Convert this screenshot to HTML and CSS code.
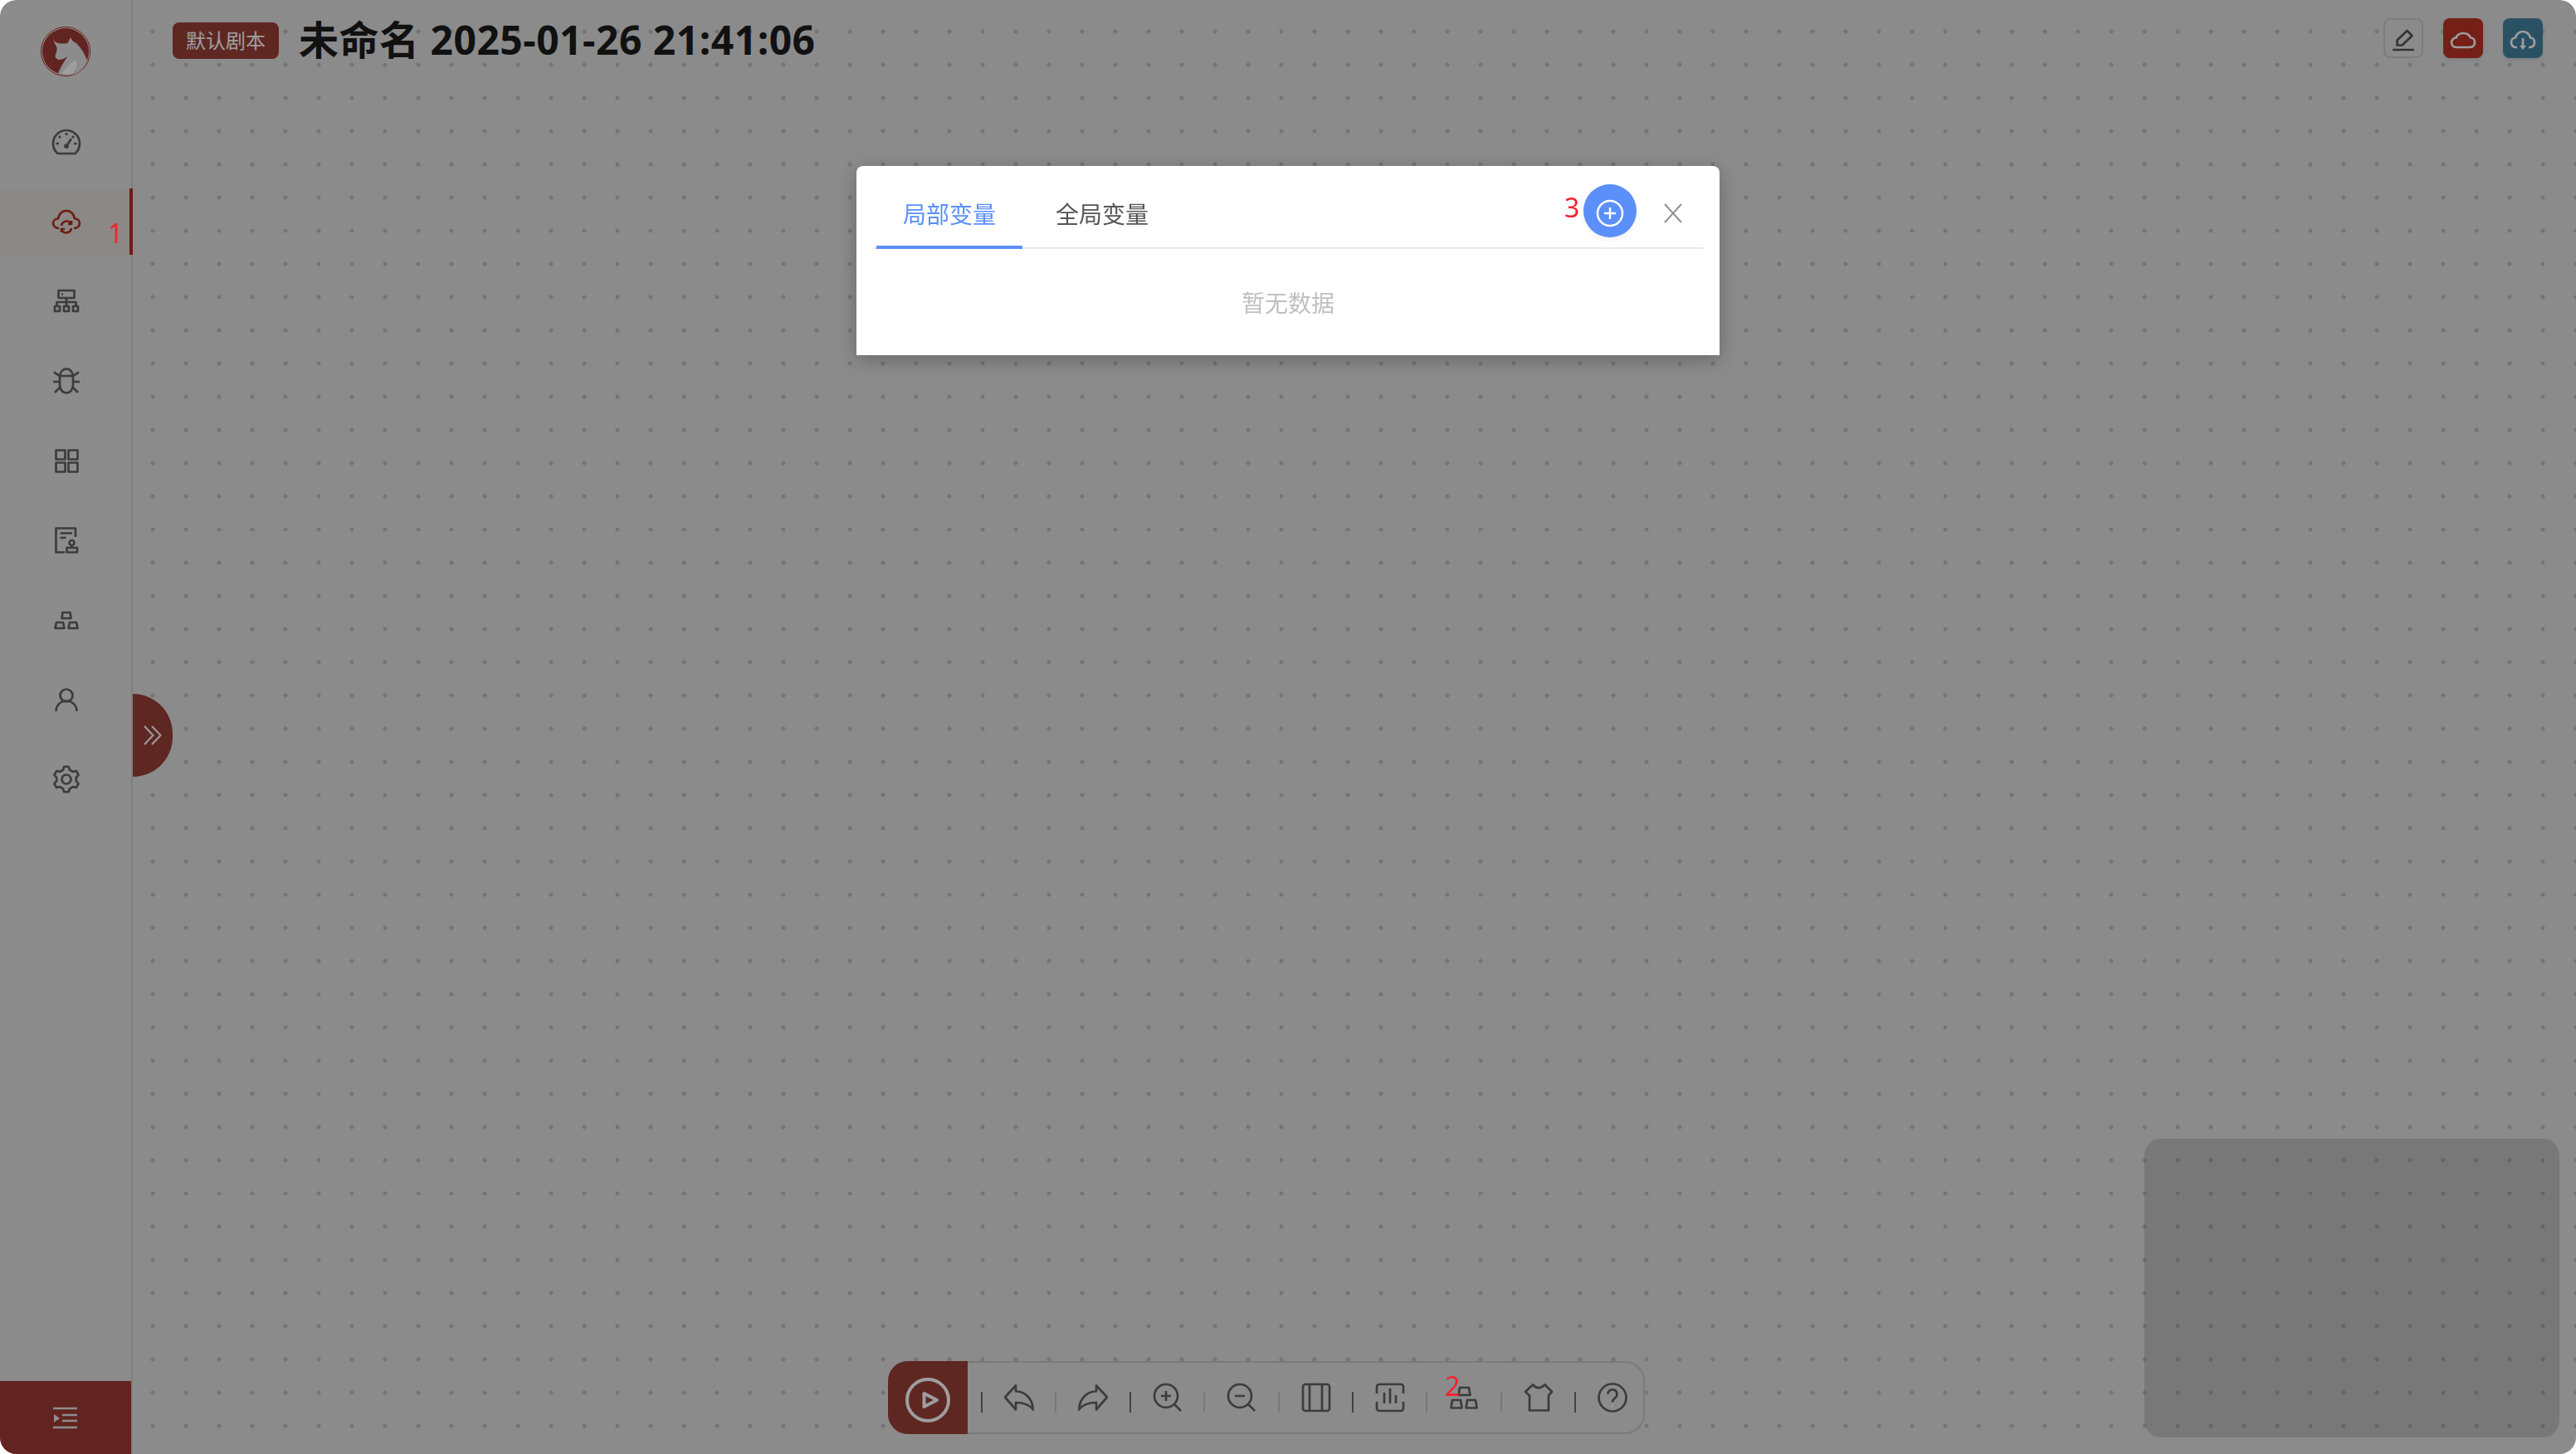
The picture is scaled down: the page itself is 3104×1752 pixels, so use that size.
FILE: index.html
```html
<!DOCTYPE html>
<html>
<head>
    <title>未命名 2025-01-26 21:41:06</title>
    <link rel="stylesheet" href="styles.css">
</head>
<body>
    <div class="app">
        <aside class="sidebar">
            <svg class="logo" viewBox="0 0 60 60">
                <circle cx="30" cy="30" r="29.5" fill="none" stroke="#b52d20" stroke-width="1"/>
                <circle cx="30" cy="30" r="28" fill="#9e3a34"/>
                <path fill="#e2e2e2" d="M14.3 9.7C14.5 14 15.5 16.5 18.5 19 22 21 28 21 32.7 19.7L36 13C37 16.5 39.500 18.500 42.700 19.700 48 25 53 32 56 41 53 49 48 54 42.700 56.500 36 58.500 27 58.500 21 56.300 24.500 48 28.500 41 32.700 36.300 28 39 24.500 40.500 21 39.700 18 38.500 17.300 36.500 17.700 34.700 19.500 30 20 27 19.300 24.700 16.500 20 14.800 15 14.300 9.700Z"/>
                <path fill="#ffffff" d="M25 56.800C30 50 36 44 42 40 45 46 42 53 38 57.500 33 58.300 29 58 25 56.800Z"/>
            </svg>
            <nav class="nav">
                <a class="nav-item">
                    <svg class="ico" viewBox="0 0 40 40"><path d="M9.400 34h21.200A16 16 0 1 0 9.400 34z"/><path d="M20 9v3M11 13l2 2M29 13l-2 2M7.500 22H11M32.500 22H29M20 25l6-9"/><circle cx="20" cy="25" r="1.500"/></svg>
                </a>
                <a class="nav-item active">
                    <svg class="ico" viewBox="0 0 40 40"><path d="M11 28C7 28 4 25.500 4 22 4 19 6.500 16.500 10 16.500 11.500 10.500 15 7 20 7S28.500 10.500 30 16.500C33.500 16.500 36 19 36 22 36 25.500 33 28 29 28"/><path d="M14 25a6.500 6.500 0 0 1 11.500-3M26 28a6.500 6.500 0 0 1-11.500 3M26 19v4h-4M14 33v-4h4"/></svg>
                </a>
                <a class="nav-item">
                    <svg class="ico" viewBox="0 0 40 40"><rect x="10.500" y="7" width="19" height="9"/><path d="M14 11.500h2M20 16v5M8.500 26v-5h23v5M20 21v5"/><rect x="6" y="26" width="6" height="6"/><rect x="17" y="26" width="6" height="6"/><rect x="28" y="26" width="6" height="6"/></svg>
                </a>
                <a class="nav-item">
                    <svg class="ico" viewBox="0 0 40 40"><path d="M12 18C12 10 15 5.500 20 5.500S28 10 28 18V25C28 31 24 34.500 20 34.500S12 31 12 25Z"/><path d="M12 14H28M5 9.500L12 14M35 9.500L28 14M4 21H12M36 21H28M6 34L12 28M34 34L28 28"/></svg>
                </a>
                <a class="nav-item">
                    <svg class="ico" viewBox="0 0 40 40"><rect x="7.500" y="7.500" width="11" height="11"/><rect x="22.500" y="7.500" width="11" height="11"/><rect x="7.500" y="22.500" width="11" height="11"/><rect x="22.500" y="22.500" width="11" height="11"/></svg>
                </a>
                <a class="nav-item">
                    <svg class="ico" viewBox="0 0 40 40"><path d="M18 34.500H7.500V5.500H31V16"/><path d="M12.500 11.500H27M12.500 17H19.500"/><circle cx="26.500" cy="23" r="3"/><path d="M26.500 26V29"/><rect x="20.500" y="29" width="12.500" height="5.500"/></svg>
                </a>
                <a class="nav-item">
                    <svg class="ico" viewBox="0 0 40 40"><path d="M15.500 11h9l1 7H14.500zM8 23h8l1.500 7H6.500zM24 23h8l1.500 7H22.500z"/></svg>
                </a>
                <a class="nav-item">
                    <svg class="ico" viewBox="0 0 40 40"><circle cx="20" cy="15" r="7.500"/><path d="M7.500 34a12.500 12.500 0 0 1 25 0"/></svg>
                </a>
                <a class="nav-item">
                    <svg class="ico" viewBox="0 0 40 40"><polygon points="15.900,8.720 17.310,4.740 22.690,4.740 24.100,8.720 27.720,10.810 31.870,10.040 34.560,14.700 31.820,17.910 31.820,22.090 34.560,25.300 31.870,29.960 27.720,29.190 24.100,31.280 22.690,35.260 17.310,35.260 15.900,31.280 12.280,29.190 8.130,29.960 5.440,25.300 8.180,22.090 8.180,17.910 5.440,14.700 8.130,10.040 12.280,10.810"/><circle cx="20" cy="20" r="5.500"/></svg>
                </a>
            </nav>
            <button class="collapse">
                <svg width="32" height="32" viewBox="0 0 32 32"><path d="M1 4H30M12 12H30M12 19H30M1 27H30" stroke="#e6e6e6" stroke-width="2.500" fill="none"/><path d="M2 11L9 16L2 21Z" fill="#e6e6e6"/></svg>
            </button>
        </aside>

        <main class="canvas">
            <header class="header">
                <div class="title-wrap">
                    <span class="tag">默认剧本</span>
                    <h1 class="title">未命名 2025-01-26 21:41:06</h1>
                </div>
                <div class="actions">
                    <button class="act act-edit">
                        <svg class="ico" viewBox="0 0 48 48"><path d="M11 38H37M16.500 32.500V26.500L28.500 15 34.500 21 22.500 32.500Z"/></svg>
                    </button>
                    <button class="act act-red">
                        <svg class="ico" viewBox="0 0 48 48"><path d="M15.500 35H32C35.500 35 38 32.500 38 29 38 25.500 35.500 23.500 33 23.500 31.500 20 28 18 24 18 20 18 16.500 20.500 15.500 23.500 12 23.500 10 26.500 10 29 10 32.500 12.500 35 15.500 35Z"/></svg>
                    </button>
                    <button class="act act-blue">
                        <svg class="ico" viewBox="0 0 48 48"><path d="M17 35H15C12 35 10 32 10 29 10 25.500 12.500 23.500 15 23.500 16 19 20 16 24 16S32 19 33 23.500C35.500 23.500 38 25.500 38 29 38 32 36 35 33 35H31M24 24V34"/><path class="solid" d="M20 33h8l-4 5z"/></svg>
                    </button>
                </div>
            </header>

            <button class="expand">
                <svg width="24" height="24" viewBox="0 0 24 24"><path d="M2 1L12.500 12 2 23M11 1L21.500 12 11 23" fill="none" stroke="#fff" stroke-width="2"/></svg>
            </button>

            <div class="minimap"></div>

            <div class="toolbar">
                <button class="play">
                    <svg width="60" height="60" viewBox="0 0 60 60"><circle cx="30" cy="30" r="25" fill="none" stroke="#fff" stroke-width="4"/><polygon points="25.500,22 41,30 25.500,38" fill="none" stroke="#fff" stroke-width="4" stroke-linejoin="round"/></svg>
                </button>
                <div class="tool"><i class="sep dark"></i>
                    <svg class="ico" viewBox="0 0 36 36"><path d="M1 17.500L14 3.500V10.500C25 10.500 34 19 35 32.500 30 26 23 24 14 24V32.500Z"/></svg>
                </div>
                <div class="tool"><i class="sep"></i>
                    <svg class="ico" viewBox="0 0 36 36"><path transform="matrix(-1 0 0 1 36 0)" d="M1 17.500L14 3.500V10.500C25 10.500 34 19 35 32.500 30 26 23 24 14 24V32.500Z"/></svg>
                </div>
                <div class="tool"><i class="sep dark"></i>
                    <svg class="ico" viewBox="0 0 36 36"><circle cx="16" cy="16" r="14"/><path d="M26.500 26.500L34 34M10 16H22M16 10V22"/></svg>
                </div>
                <div class="tool"><i class="sep"></i>
                    <svg class="ico" viewBox="0 0 36 36"><circle cx="16" cy="16" r="14"/><path d="M26.500 26.500L34 34M10 16H22"/></svg>
                </div>
                <div class="tool"><i class="sep"></i>
                    <svg class="ico" viewBox="0 0 36 36"><rect x="2" y="2" width="32" height="32" rx="3"/><path d="M10 2V34M25 2V34"/></svg>
                </div>
                <div class="tool"><i class="sep dark"></i>
                    <svg class="ico" viewBox="0 0 36 36"><path d="M2 13V5A3 3 0 0 1 5 2H31A3 3 0 0 1 34 5V13M2 23V31A3 3 0 0 0 5 34H31A3 3 0 0 0 34 31V23M11 12V25M18 7V25M25 15V25"/></svg>
                </div>
                <div class="tool"><i class="sep"></i>
                    <svg class="ico" viewBox="0 0 36 36"><path d="M13 6H24L25.500 15H11.500ZM4 21H14L15.500 30.500H2.500ZM22 21H32L33.500 30.500H20.500Z"/></svg>
                </div>
                <div class="tool"><i class="sep"></i>
                    <svg class="ico" viewBox="0 0 36 36"><path d="M2 11L11 2.500Q18 10 25.500 2.500L34 11 30 15.500V33.500H7V15.500Z"/></svg>
                </div>
                <div class="tool"><i class="sep dark"></i>
                    <svg class="ico" viewBox="0 0 36 36"><circle cx="18" cy="18" r="16.500"/><path d="M12.500 14A5.500 5.500 0 1 1 21 18.500C19 20 18 21 18 23.500"/><circle class="solid" cx="18" cy="28" r="1.500"/></svg>
                </div>
            </div>
        </main>
    </div>

    <div class="mask">
        <div class="modal">
            <div class="tabs">
                <span class="tab active">局部变量</span>
                <span class="tab">全局变量</span>
                <button class="add">
                    <svg width="36" height="36" viewBox="0 0 36 36"><circle cx="18" cy="18" r="15" fill="none" stroke="#fff" stroke-width="2.500"/><path d="M11 18H25M18 11V25" stroke="#fff" stroke-width="2.500"/></svg>
                </button>
                <button class="close">
                    <svg width="24" height="24" viewBox="0 0 24 24"><path d="M2 1L22 23M22 1L2 23" stroke="#8f8f8f" stroke-width="2" fill="none"/></svg>
                </button>
            </div>
            <div class="empty">暂无数据</div>
        </div>
        <span class="mark mark-1">1</span>
        <span class="mark mark-2">2</span>
        <span class="mark mark-3">3</span>
    </div>
</body>
</html>
```

FILE: styles.css
```css
* {
    box-sizing: border-box;
}
html, body {
    height: 100%;
}
body {
    margin: 0;
    background-color: #fff;
    overflow: hidden;
    font-family: "Noto Sans CJK SC", "Noto Sans", sans-serif;
}
button {
    padding: 0;
    border: 0;
    background: none;
    font: inherit;
}
.app {
    display: flex;
    height: 100vh;
    border-radius: 20px;
    overflow: hidden;
}
.ico {
    display: block;
    fill: none;
    stroke: #626262;
    stroke-width: 2.7;
    stroke-linejoin: round;
}
.solid {
    fill: #fff;
    stroke: none;
}

/* left side */
.sidebar {
    display: flex;
    flex-direction: column;
    flex: none;
    width: 160px;
    padding-top: 32px;
    background-color: #e2e2e2;
    border-right: 2px solid #cecece;
}
.logo {
    display: block;
    flex: none;
    width: 60px;
    height: 60px;
    margin-left: 49px;
    margin-bottom: 39px;
}
.nav {
    display: flex;
    flex-direction: column;
    gap: 16px;
}
.nav-item {
    display: flex;
    align-items: center;
    justify-content: center;
    width: 160px;
    height: 80px;
}
.nav-item .ico {
    width: 40px;
    height: 40px;
}
.nav-item.active {
    background-color: #e0dcd9;
    box-shadow: inset -4px 0 0 #b52d20;
}
.nav-item.active .ico {
    stroke: #b52d20;
}
.collapse {
    display: flex;
    align-items: center;
    justify-content: center;
    flex: none;
    height: 88px;
    margin-top: auto;
    padding-top: 2px;
    background-color: #9e3a34;
}

/* dotted canvas */
.canvas {
    position: relative;
    flex: 1;
    background-color: #e0e0e0;
    background-image: radial-gradient(circle at center, #bcbcbc 2px, transparent 3px);
    background-size: 40px 40px;
    background-position: 4px 18px;
}
.header {
    display: flex;
    justify-content: space-between;
    padding: 22px 40px 0 48px;
}
.title-wrap {
    display: flex;
    align-items: center;
    height: 54px;
}
.tag {
    width: 128px;
    height: 44px;
    margin-right: 24px;
    border-radius: 8px;
    background-color: #993f37;
    color: #fff;
    font-size: 24px;
    line-height: 42px;
    text-align: center;
}
.title {
    margin: -2px 0 0;
    color: #1c1c1c;
    font-family: "Noto Sans", "Noto Sans CJK SC", sans-serif;
    font-size: 48px;
    font-weight: 700;
    line-height: 54px;
    letter-spacing: 0.5px;
}
.actions {
    display: flex;
    gap: 24px;
}
.act {
    display: block;
    width: 48px;
    height: 48px;
    border-radius: 8px;
    box-shadow: 0 2px 4px rgba(0, 0, 0, 0.08);
}
.act .ico {
    width: 48px;
    height: 48px;
    stroke: #fff;
}
.act-edit {
    background-color: #e0e0e0;
    box-shadow: inset 0 0 0 2px #c8c8c8;
}
.act-edit .ico {
    stroke: #555;
}
.act-red {
    background-color: #bb3425;
}
.act-blue {
    background-color: #4484a0;
}
.expand {
    position: absolute;
    left: 0;
    top: 836px;
    display: flex;
    align-items: center;
    justify-content: center;
    width: 48px;
    height: 100px;
    border-radius: 0 48px 48px 0;
    background-color: #993f37;
}
.minimap {
    position: absolute;
    right: 20px;
    bottom: 20px;
    width: 500px;
    height: 360px;
    border-radius: 20px;
    background-color: rgba(0, 0, 0, 0.135);
}

/* bottom tools */
.toolbar {
    position: absolute;
    left: 910px;
    bottom: 24px;
    display: flex;
    width: 912px;
    height: 88px;
    border: 2px solid #c5c5c5;
    border-radius: 24px;
    background-color: #e0e0e0;
}
.play {
    display: flex;
    align-items: center;
    justify-content: center;
    flex: none;
    width: 96px;
    margin: -2px 16px -2px -2px;
    border-radius: 24px 0 0 24px;
    background-color: #993f37;
}
.play svg {
    margin-top: 6px;
}
.tool {
    display: flex;
    align-items: center;
    flex: none;
    width: 89.4px;
}
.tool:last-child {
    width: 80px;
}
.tool .ico {
    width: 36px;
    height: 36px;
    margin-left: 26px;
}
.sep {
    flex: none;
    width: 2px;
    height: 25px;
    margin-top: 10px;
    background-color: #c0c0c0;
}
.sep.dark {
    background-color: #6b6b6b;
}

/* dialog */
.mask {
    position: fixed;
    top: 0;
    right: 0;
    bottom: 0;
    left: 0;
    display: flex;
    justify-content: center;
    align-items: flex-start;
    padding-top: 200px;
    border-radius: 20px;
    background-color: rgba(0, 0, 0, 0.38);
}
.modal {
    width: 1040px;
    height: 228px;
    padding: 0 20px;
    border-radius: 8px 8px 0 0;
    background-color: #fff;
    box-shadow: 0 6px 24px rgba(0, 0, 0, 0.25);
}
.tabs {
    display: flex;
    align-items: flex-start;
    height: 100px;
    padding-left: 4px;
    border-bottom: 2px solid #e9e9e9;
}
.tab {
    height: 84px;
    margin: 16px 8px 0 0;
    padding: 0 32px;
    color: #555;
    font-size: 28px;
    line-height: 82px;
}
.tab.active {
    height: 84px;
    border-bottom: 4px solid #5b8ff9;
    color: #5b8ff9;
}
.add {
    display: flex;
    align-items: center;
    justify-content: center;
    width: 64px;
    height: 64px;
    margin: 22px 0 0 auto;
    padding-top: 6px;
    border-radius: 50%;
    background-color: #5b8ff9;
    box-shadow: 0 3px 6px rgba(0, 0, 0, 0.06);
}
.close {
    display: block;
    width: 24px;
    height: 24px;
    margin: 45px 24px 0 32px;
}
.empty {
    height: 128px;
    color: #bfbfbf;
    font-size: 28px;
    line-height: 128px;
    text-align: center;
}

/* red markers laid over the screenshot */
.mark {
    position: absolute;
    color: #f5222d;
    font-family: "Noto Sans", sans-serif;
    font-size: 32px;
    line-height: 32px;
}
.mark-1 {
    left: 130px;
    top: 265px;
}
.mark-2 {
    left: 1741px;
    top: 1654px;
}
.mark-3 {
    left: 1885px;
    top: 234px;
}
```
